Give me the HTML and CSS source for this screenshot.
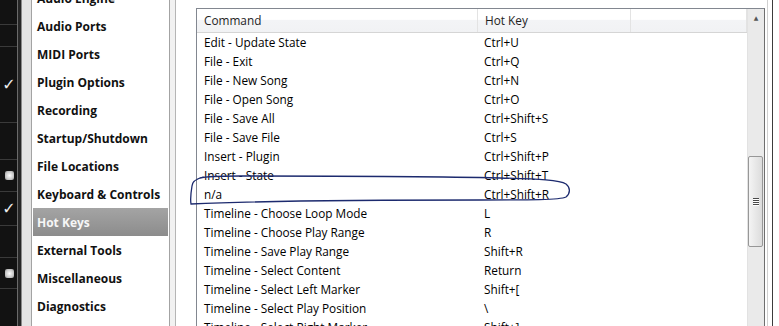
FILE: index.html
```html
<!DOCTYPE html>
<html lang="en">
<head>
  <meta charset="UTF-8">
  <title>Preferences - Hot Keys</title>
  <link rel="stylesheet" href="styles.css">
</head>
<body>

  <div class="window">

    <div class="rail">
      <div class="rail-dark">
        <div class="rail-row" style="height: 25px;"></div>
        <div class="rail-row" style="height: 22px;"></div>
        <div class="rail-row check" style="height: 76px;">&#10003;</div>
        <div class="rail-row" style="height: 37px;"></div>
        <div class="rail-row box" style="height: 32px;"><span></span></div>
        <div class="rail-row check" style="height: 34px;">&#10003;</div>
        <div class="rail-row" style="height: 32px;"></div>
        <div class="rail-row box" style="height: 31px;"><span></span></div>
        <div class="rail-row" style="height: 40px;"></div>
      </div>
      <div class="rail-edge"></div>
    </div>

    <ul class="nav">
      <li>Audio Engine</li>
      <li>Audio Ports</li>
      <li>MIDI Ports</li>
      <li>Plugin Options</li>
      <li>Recording</li>
      <li>Startup/Shutdown</li>
      <li>File Locations</li>
      <li>Keyboard &amp; Controls</li>
      <li class="active">Hot Keys</li>
      <li>External Tools</li>
      <li>Miscellaneous</li>
      <li>Diagnostics</li>
    </ul>

    <div class="splitter"></div>

    <div class="content">
      <div class="listview">
        <div class="grid">
          <div class="head">
            <div class="col-cmd">Command</div>
            <div class="col-key">Hot Key</div>
            <div class="col-rest"></div>
          </div>
          <div class="rows" id="rows"></div>
        </div>
        <div class="scrollbar">
          <div class="arrow">&#9650;</div>
          <div class="thumb"><span></span><span></span><span></span><span></span></div>
        </div>
      </div>
    </div>

    <svg class="scribble" width="779" height="326" viewBox="0 0 779 326">
      <path d="M 203 177 C 196 179, 192 182, 192 186 C 191 192, 190 198, 191 204
               C 260 201, 400 200, 480 200 C 530 200, 560 200, 566 197
               C 571 193, 570 187, 566 184 C 560 180, 540 179, 500 178
               C 420 176, 300 176, 240 176 C 220 176, 208 176, 200 178"
            fill="none" stroke="#1c2a6e" stroke-width="1.3" stroke-linecap="round"/>
    </svg>

  </div>

  <script>
    const hotkeys = [
      ['Edit - Update State', 'Ctrl+U'],
      ['File - Exit', 'Ctrl+Q'],
      ['File - New Song', 'Ctrl+N'],
      ['File - Open Song', 'Ctrl+O'],
      ['File - Save All', 'Ctrl+Shift+S'],
      ['File - Save File', 'Ctrl+S'],
      ['Insert - Plugin', 'Ctrl+Shift+P'],
      ['Insert - State', 'Ctrl+Shift+T'],
      ['n/a', 'Ctrl+Shift+R'],
      ['Timeline - Choose Loop Mode', 'L'],
      ['Timeline - Choose Play Range', 'R'],
      ['Timeline - Save Play Range', 'Shift+R'],
      ['Timeline - Select Content', 'Return'],
      ['Timeline - Select Left Marker', 'Shift+['],
      ['Timeline - Select Play Position', '\\'],
      ['Timeline - Select Right Marker', 'Shift+]']
    ];

    const rows = document.getElementById('rows');
    hotkeys.forEach(([cmd, key]) => {
      const row = document.createElement('div');
      row.className = 'row';
      row.innerHTML = '<div class="col-cmd"></div><div class="col-key"></div><div class="col-rest"></div>';
      row.children[0].textContent = cmd;
      row.children[1].textContent = key;
      rows.appendChild(row);
    });
  </script>

</body>
</html>
```

FILE: styles.css
```css
body {
  margin: 0;
  background-color: #ffffff;
  font-family: 'Open Sans', 'Noto Sans', sans-serif;
  color: #000;
}
.window {
  position: relative;
  display: flex;
  width: 779px;
  height: 326px;
  overflow: hidden;
  background-color: #ffffff;
}

/* dark strip on the far left */
.rail {
  display: flex;
  flex: none;
  width: 31px;
}
.rail-dark {
  width: 17px;
  background-color: #121212;
}
.rail-row {
  border-bottom: 1px solid #3a3a3a;
  box-sizing: border-box;
  display: flex;
  align-items: center;
  justify-content: center;
  color: #ececec;
  font-family: 'DejaVu Sans', sans-serif;
  font-size: 16px;
  font-weight: bold;
  padding-left: 1px;
}
.rail-row.box span {
  width: 9px;
  height: 9px;
  border-radius: 2px;
  background: radial-gradient(circle, #ffffff 0%, #c8c8c8 60%, #8a8a8a 100%);
}
.rail-edge {
  flex: 1;
  border-left: 1px solid #6a6a6a;
  box-shadow: inset 3px 0 0 #262626, inset 4px 0 0 #8a8a8a;
  background-color: #e4e4e4;
}

/* category list */
.nav {
  flex: none;
  width: 137px;
  margin: 0;
  padding: 0;
  list-style: none;
  border-left: 1px solid #a3a3a3;
  border-right: 1px solid #a3a3a3;
  background-color: #fff;
  margin-top: -16px;
}
.nav li {
  height: 28px;
  line-height: 29px;
  padding-left: 5px;
  font-size: 12px;
  font-weight: bold;
  color: #111;
  white-space: nowrap;
}
.nav li.active {
  margin: 0 1px;
  padding-left: 4px;
  background: linear-gradient(#a4a4a4, #8c8c8c);
  color: #f6f6f6;
}

.splitter {
  flex: none;
  width: 5px;
  background-color: #f1f1f1;
  border-right: 1px solid #b5b5b5;
}

/* right side */
.content {
  flex: none;
  width: 569px;
  padding: 8px 7px 0 20px;
  border-right: 1px solid #3c3c3c;
  box-shadow: inset -4px 0 0 #ffffff, inset -5px 0 0 #d0d0d0;
}
.listview {
  display: flex;
  height: 340px;
  border: 1px solid #828790;
  border-right-color: #6f6f6f;
}
.grid {
  flex: 1;
  font-size: 11.8px;
}
.head, .row {
  display: flex;
}
.head {
  height: 23px;
  line-height: 23px;
  background: linear-gradient(#ffffff 0%, #ffffff 45%, #f3f4f6 50%, #f1f2f4 100%);
  border-bottom: 1px solid #d5d5d5;
  color: #1e1e1e;
}
.head > div {
  border-right: 1px solid #e3e3e3;
}
.row {
  height: 19px;
  line-height: 19px;
}
.col-cmd {
  width: 273px;
  padding-left: 7px;
  white-space: nowrap;
}
.col-key {
  width: 145px;
  padding-left: 7px;
  white-space: nowrap;
}
.col-rest {
  flex: 1;
}

.scrollbar {
  position: relative;
  width: 16px;
  background-color: #eaeaea;
  border-left: 1px solid #e2e2e2;
}
.arrow {
  text-align: center;
  font-family: 'DejaVu Sans', sans-serif;
  font-size: 6px;
  color: #555;
  padding-top: 5px;
}
.thumb {
  position: absolute;
  top: 147px;
  left: 0;
  width: 13px;
  height: 89px;
  border: 1px solid #979797;
  border-radius: 2px;
  background: linear-gradient(to right, #f4f4f4, #dcdcdc);
  display: flex;
  flex-direction: column;
  align-items: center;
  justify-content: center;
  gap: 1px;
}
.thumb span {
  width: 6px;
  height: 1px;
  background-color: #4a4a4a;
  box-shadow: 0 1px 0 #ffffff;
}

.scribble {
  position: absolute;
  top: 0;
  left: 0;
  pointer-events: none;
}
```
